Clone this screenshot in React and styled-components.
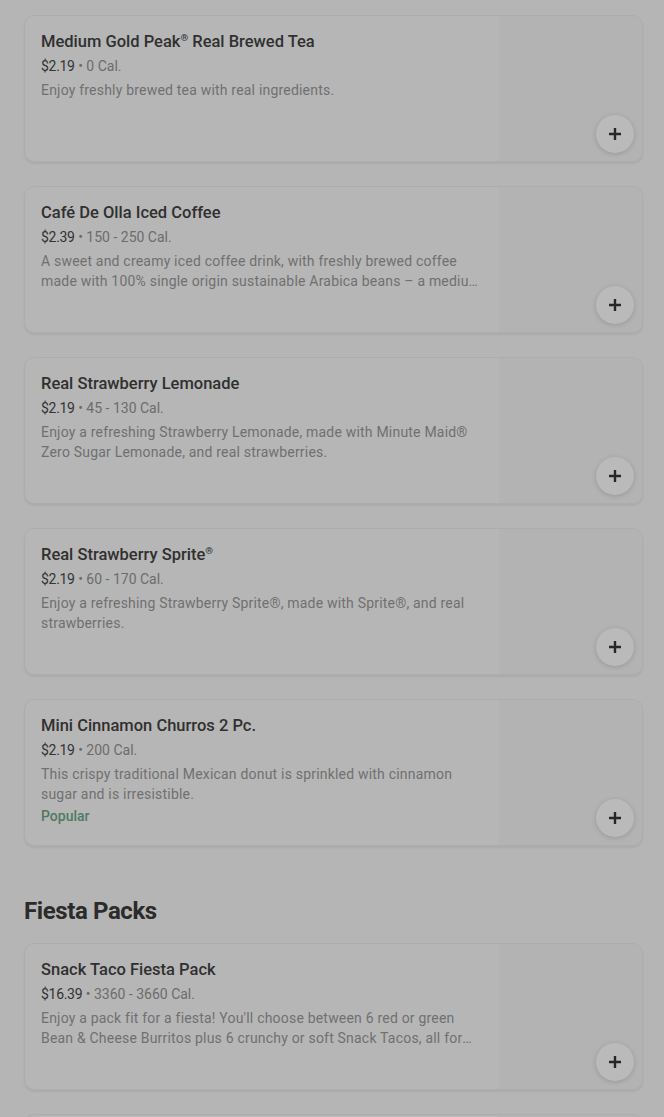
import React from "react";
import styled, { createGlobalStyle } from "styled-components";

const GlobalStyle = createGlobalStyle`
  body {
    margin: 0;
    background: #b5b5b5;
    font-family: Roboto, "Liberation Sans", Arial, sans-serif;
    -webkit-font-smoothing: antialiased;
  }
`;

const Page = styled.div`
  padding: 15px 21px 0 24px;
  height: 1117px;
  overflow: hidden;
  box-sizing: border-box;
`;

const Section = styled.section`
  display: flex;
  flex-direction: column;
  gap: 24px;
`;

const SectionTitle = styled.h2`
  margin: 51px 0 18px;
  font-size: 24px;
  line-height: 28px;
  font-weight: 700;
  color: #2b2b2b;
  letter-spacing: -0.4px;
`;

const Card = styled.div`
  display: grid;
  grid-template-columns: 1fr 143px;
  height: 147px;
  box-sizing: border-box;
  border: 1px solid #adadad;
  border-radius: 10px;
  background: #b6b6b6;
  box-shadow: 0 2px 2px rgba(0, 0, 0, 0.06);
  overflow: hidden;
`;

const Info = styled.div`
  padding: 16px 16px 0 16px;
  display: flex;
  flex-direction: column;
  min-width: 0;
`;

const Title = styled.div`
  font-size: 16.5px;
  line-height: 20px;
  font-weight: 500;
  color: #303030;
`;

const Reg = styled.sup`
  font-size: 0.6em;
  line-height: 0;
`;

const Meta = styled.div`
  margin-top: 4px;
  font-size: 14px;
  line-height: 20px;
  color: #6c6c6c;
`;

const Price = styled.span`
  color: #333333;
  letter-spacing: -0.3px;
`;

const Description = styled.div`
  margin-top: 4px;
  font-size: 14px;
  line-height: 20px;
  letter-spacing: 0.2px;
  color: #707070;
  display: -webkit-box;
  -webkit-line-clamp: 2;
  -webkit-box-orient: vertical;
  overflow: hidden;
`;

const Tag = styled.div`
  margin-top: 2px;
  font-size: 14px;
  line-height: 20px;
  font-weight: 500;
  color: #4f7a62;
`;

const Thumb = styled.div`
  position: relative;
  background: #b3b3b3;
`;

const AddButton = styled.button`
  position: absolute;
  right: 8px;
  bottom: 8px;
  width: 38px;
  height: 38px;
  border-radius: 50%;
  border: none;
  padding: 0;
  background: #bababa;
  box-shadow: 0 1px 5px rgba(0, 0, 0, 0.16);
  display: flex;
  align-items: center;
  justify-content: center;
  color: #262626;
`;

const PlusIcon = () => (
  <svg width="14" height="14" viewBox="0 0 14 14" fill="none">
    <path d="M7 1v12M1 7h12" stroke="currentColor" strokeWidth="2.4" />
  </svg>
);

// titles with a trailing ® get it as a small superscript, like the menu does
const renderName = (name) => {
  const parts = name.split("®");
  return parts.map((part, i) => (
    <React.Fragment key={i}>
      {part}
      {i < parts.length - 1 && <Reg>®</Reg>}
    </React.Fragment>
  ));
};

const drinks = [
  {
    name: "Medium Gold Peak® Real Brewed Tea",
    price: "$2.19",
    cal: "0 Cal.",
    desc: "Enjoy freshly brewed tea with real ingredients.",
  },
  {
    name: "Café De Olla Iced Coffee",
    price: "$2.39",
    cal: "150 - 250 Cal.",
    desc:
      "A sweet and creamy iced coffee drink, with freshly brewed coffee made with 100% single origin sustainable Arabica beans – a medium roast with notes of cinnamon and piloncillo.",
  },
  {
    name: "Real Strawberry Lemonade",
    price: "$2.19",
    cal: "45 - 130 Cal.",
    desc:
      "Enjoy a refreshing Strawberry Lemonade, made with Minute Maid® Zero Sugar Lemonade, and real strawberries.",
  },
  {
    name: "Real Strawberry Sprite®",
    price: "$2.19",
    cal: "60 - 170 Cal.",
    desc:
      "Enjoy a refreshing Strawberry Sprite®, made with Sprite®, and real strawberries.",
  },
  {
    name: "Mini Cinnamon Churros 2 Pc.",
    price: "$2.19",
    cal: "200 Cal.",
    desc:
      "This crispy traditional Mexican donut is sprinkled with cinnamon sugar and is irresistible.",
    tag: "Popular",
  },
];

const packs = [
  {
    name: "Snack Taco Fiesta Pack",
    price: "$16.39",
    cal: "3360 - 3660 Cal.",
    desc:
      "Enjoy a pack fit for a fiesta! You'll choose between 6 red or green Bean & Cheese Burritos plus 6 crunchy or soft Snack Tacos, all for one great price.",
  },
  {
    name: "Taco Lover's Fiesta Pack",
    price: "$21.49",
    cal: "2040 - 2580 Cal.",
    desc: "Twelve tacos your way, made for sharing with the whole crew.",
  },
];

const MenuItem = ({ item }) => (
  <Card>
    <Info>
      <Title>{renderName(item.name)}</Title>
      <Meta>
        <Price>{item.price}</Price> • {item.cal}
      </Meta>
      <Description>{item.desc}</Description>
      {item.tag && <Tag>{item.tag}</Tag>}
    </Info>
    <Thumb>
      <AddButton aria-label="Add">
        <PlusIcon />
      </AddButton>
    </Thumb>
  </Card>
);

export default function App() {
  return (
    <>
      <GlobalStyle />
      <Page>
        <Section>
          {drinks.map((item) => (
            <MenuItem key={item.name} item={item} />
          ))}
        </Section>
        <SectionTitle>Fiesta Packs</SectionTitle>
        <Section>
          {packs.map((item) => (
            <MenuItem key={item.name} item={item} />
          ))}
        </Section>
      </Page>
    </>
  );
}
